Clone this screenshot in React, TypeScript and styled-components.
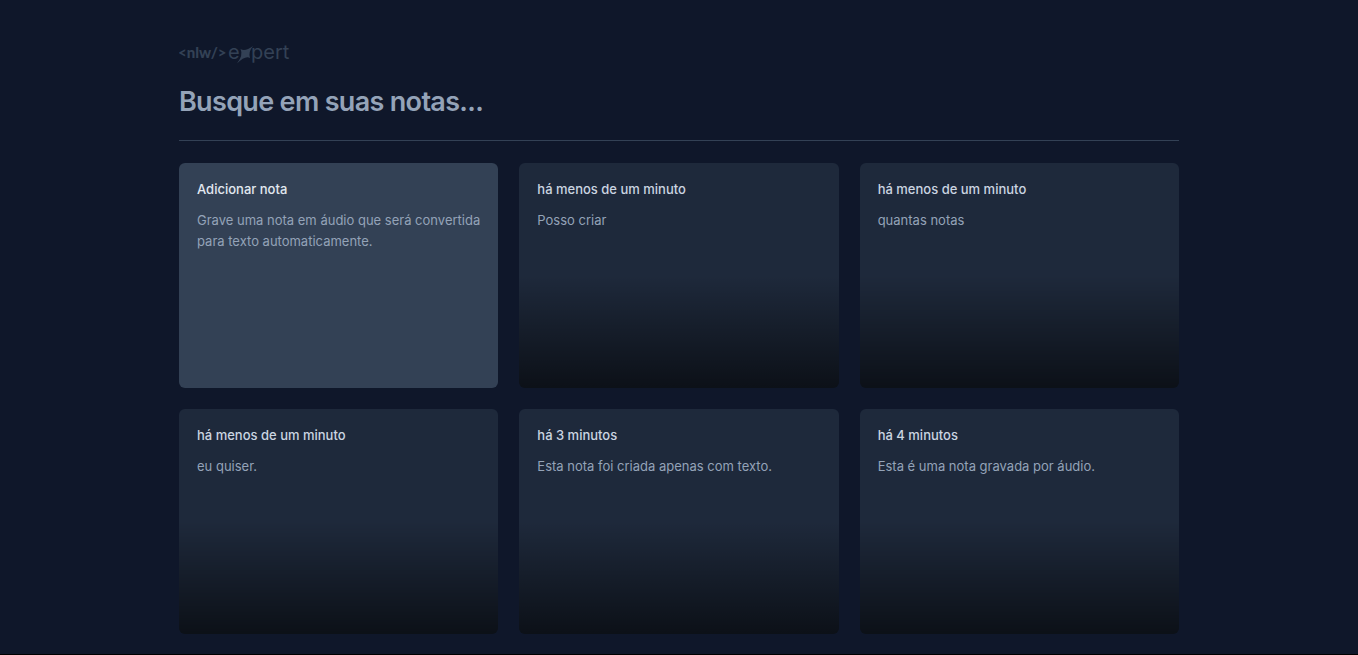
import React from 'react';
import styled, { createGlobalStyle } from 'styled-components';

const GlobalStyle = createGlobalStyle`
  *, *::before, *::after { box-sizing: border-box; }
  body {
    margin: 0;
    background: #0f172a;
    color: #f8fafc;
    font-family: Inter, "Liberation Sans", sans-serif;
    font-size: 13px;
  }
`;

const Page = styled.div`
  min-height: 100vh;
  border-bottom: 1px solid #000;
`;

const Container = styled.main`
  max-width: 1000px;
  margin: 0 auto;
  padding: 38px 0 20px;
  display: flex;
  flex-direction: column;
`;

const LogoMark = styled.svg`
  display: block;
  fill: #334155;
  stroke: none;
`;

const LogoTag = styled.text`
  font: 900 15px Lato, sans-serif;
`;

const LogoName = styled.text`
  font: 400 20px Inter, sans-serif;
`;

const SearchForm = styled.form`
  margin-top: 15px;
  padding-bottom: 21px;
  border-bottom: 1px solid #334155;
`;

const SearchInput = styled.input`
  display: block;
  width: 100%;
  height: 34px;
  padding: 0;
  border: 0;
  outline: none;
  background: transparent;
  color: inherit;
  font: 600 27px/34px Inter, "Liberation Sans", sans-serif;
  letter-spacing: -0.025em;
  &::placeholder { color: #94a3b8; opacity: 1; }
`;

const NoteGrid = styled.div`
  margin-top: 22px;
  display: grid;
  grid-template-columns: repeat(3, 1fr);
  grid-auto-rows: 225px;
  gap: 21px;
`;

const Card = styled.button<{ $primary?: boolean }>`
  display: flex;
  flex-direction: column;
  gap: 10px;
  padding: 16px 18px;
  border: 0;
  border-radius: 6px;
  text-align: left;
  font: inherit;
  line-height: 21px;
  cursor: pointer;
  color: ${({ $primary }) => ($primary ? '#e2e8f0' : '#cbd5e1')};
  background: ${({ $primary }) =>
    $primary ? '#334155' : 'linear-gradient(to top, rgba(0, 0, 0, 0.6), rgba(0, 0, 0, 0) 50%), #1e293b'};
`;

const CardTitle = styled.span`
  font-weight: 500;
`;

const CardText = styled.span`
  color: #94a3b8;
`;

const notes = [
  { date: 'há menos de um minuto', content: 'Posso criar' },
  { date: 'há menos de um minuto', content: 'quantas notas' },
  { date: 'há menos de um minuto', content: 'eu quiser.' },
  { date: 'há 3 minutos', content: 'Esta nota foi criada apenas com texto.' },
  { date: 'há 4 minutos', content: 'Esta é uma nota gravada por áudio.' },
];

function Logo() {
  return (
    <LogoMark width="116" height="32" viewBox="0 0 116 32" role="img" aria-label="nlw expert">
      <LogoTag x="-1" y="20">{'<nlw/>'}</LogoTag>
      <LogoName x="49" y="21">e</LogoName>
      <path d="M61.5 11 Q66 14 74 8 Q69 14 71 20 Q66.5 17 58 25.5 Q64.5 17 61.5 11Z" />
      <LogoName x="72" y="21">pert</LogoName>
    </LogoMark>
  );
}

export default function App() {
  return (
    <Page>
      <GlobalStyle />
      <Container>
        <Logo />
        <SearchForm>
          <SearchInput type="text" placeholder="Busque em suas notas..." aria-label="Busque em suas notas" />
        </SearchForm>
        <NoteGrid>
          <Card type="button" $primary>
            <CardTitle>Adicionar nota</CardTitle>
            <CardText>Grave uma nota em áudio que será convertida para texto automaticamente.</CardText>
          </Card>
          {notes.map((note) => (
            <Card type="button" key={note.content}>
              <CardTitle>{note.date}</CardTitle>
              <CardText>{note.content}</CardText>
            </Card>
          ))}
        </NoteGrid>
      </Container>
    </Page>
  );
}
